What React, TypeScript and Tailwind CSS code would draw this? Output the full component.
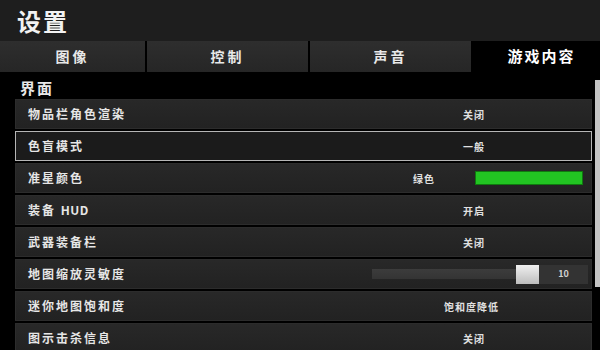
import React from 'react';

const font = { fontFamily: '"Noto Sans CJK SC", "Liberation Sans", sans-serif' };

const tabs = ['图像', '控制', '声音'];

interface RowProps {
  label: React.ReactNode;
  selected?: boolean;
  children: React.ReactNode;
}

const Row: React.FC<RowProps> = ({ label, selected, children }) => (
  <div
    className={`flex h-[30px] shrink-0 items-center ${
      selected
        ? 'border border-[#b5b5b5] bg-[#1b1b1b]'
        : 'border border-[#2c2c2c] bg-gradient-to-b from-[#282828] to-[#222222]'
    }`}
  >
    <div className="w-[360px] pl-3 text-[12px] font-bold tracking-[2px] text-[#e6e6e6]">{label}</div>
    <div className="flex flex-1 items-center">{children}</div>
  </div>
);

const Value: React.FC<{ text: string }> = ({ text }) => (
  <div className="ml-[86px] w-[24px] whitespace-nowrap text-center text-[10px] font-bold tracking-[1px] text-[#e0e0e0]">
    {text}
  </div>
);

export default function App() {
  return (
    <div className="flex h-[350px] w-[600px] flex-col overflow-hidden bg-black" style={font}>
      {/* title */}
      <div className="flex h-[41px] shrink-0 items-center bg-[#1e1e1e] pl-[17px]">
        <span className="text-[24px] font-bold tracking-[2px] text-[#f2f2f2]">设置</span>
      </div>

      {/* tabs */}
      <div className="flex h-[31px] shrink-0 bg-black">
        {tabs.map((t, i) => (
          <div
            key={t}
            className={`flex items-center justify-center bg-gradient-to-b from-[#2e2e2e] to-[#262626] text-[14px] font-bold tracking-[3px] text-[#e8e8e8] ${
              i === 0 ? 'w-[145px]' : 'ml-[2px] w-[161px]'
            }`}
          >
            {t}
          </div>
        ))}
        <div className="flex flex-1 items-center justify-center pl-[12px] text-[15px] font-bold tracking-[2px] text-white">
          游戏内容
        </div>
      </div>

      {/* content */}
      <div className="flex flex-1">
        <div className="flex flex-1 flex-col pl-[15px] pr-[3px]">
          <div className="flex h-[27px] shrink-0 items-center pl-[5px] pt-[5px] text-[15px] font-bold tracking-[2px] text-[#e8e8e8]">
            界面
          </div>
          <div className="flex flex-col gap-[2px]">
            <Row label="物品栏角色渲染">
              <Value text="关闭" />
            </Row>
            <Row label="色盲模式" selected>
              <Value text="一般" />
            </Row>
            <Row label="准星颜色">
              <div className="ml-[37px] text-[10px] font-bold tracking-[1px] text-[#e0e0e0]">绿色</div>
              <div className="ml-[40px] h-[14px] w-[108px] border border-[#0f7a0f] bg-[#22c422]" />
            </Row>
            <Row
              label={
                <>
                  装备 <span className="tracking-[0.5px]">HUD</span>
                </>
              }
            >
              <Value text="开启" />
            </Row>
            <Row label="武器装备栏">
              <Value text="关闭" />
            </Row>
            <Row label="地图缩放灵敏度">
              <div className="-ml-[4px] flex items-center">
                <div className="h-[10px] w-[144px] bg-gradient-to-b from-[#3c3c3c] to-[#343434]" />
                <div className="h-[19px] w-[23px] bg-gradient-to-b from-[#f0f0f0] to-[#bdbdbd]" />
                <div className="flex h-[19px] w-[49px] items-center justify-center bg-[#333333] text-[9px] font-bold text-[#d0d0d0]">
                  10
                </div>
              </div>
            </Row>
            <Row label="迷你地图饱和度">
              <div className="ml-[68px] text-[10px] font-bold tracking-[1px] text-[#e0e0e0]">饱和度降低</div>
            </Row>
            <Row label="图示击杀信息">
              <Value text="关闭" />
            </Row>
          </div>
        </div>
        {/* scrollbar */}
        <div className="flex w-[5px] shrink-0 flex-col pt-[8px]">
          <div className="h-[207px] bg-[#c4c4c4]" />
        </div>
      </div>
    </div>
  );
}
